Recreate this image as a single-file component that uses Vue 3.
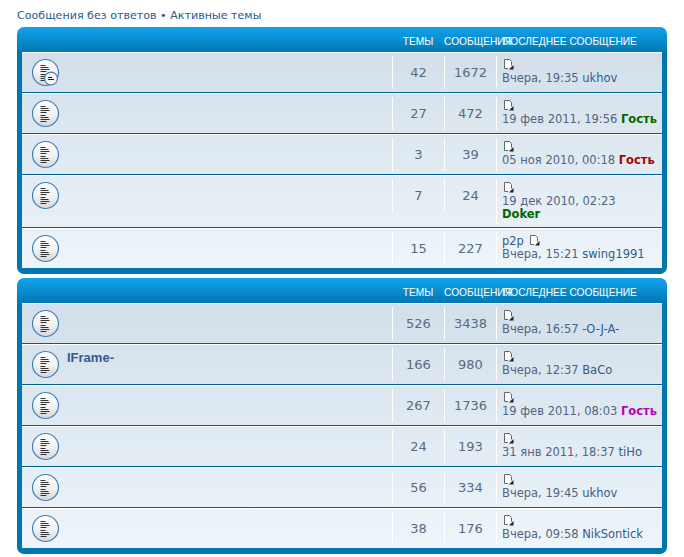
<script setup>
const forums = [
  [
    { t: 42, m: 1672, sub: true, lines: [[{ doc: 1 }], [{ s: 'Вчера, 19:35 ' }, { a: 'ukhov' }]] },
    { t: 27, m: 472, lines: [[{ doc: 1 }], [{ s: '19 фев 2011, 19:56 ' }, { b: 'Гость', c: 'green' }]] },
    { t: 3, m: 39, lines: [[{ doc: 1 }], [{ s: '05 ноя 2010, 00:18 ' }, { b: 'Гость', c: 'red' }]] },
    { t: 7, m: 24, lines: [[{ doc: 1 }], [{ s: '19 дек 2010, 02:23' }], [{ b: 'Doker', c: 'green' }]] },
    { t: 15, m: 227, lines: [[{ a: 'p2p ' }, { doc: 1 }], [{ s: 'Вчера, 15:21 ' }, { a: 'swing1991' }]] },
  ],
  [
    { t: 526, m: 3438, lines: [[{ doc: 1 }], [{ s: 'Вчера, 16:57 ' }, { a: '-O-J-A-' }]] },
    { t: 166, m: 980, title: 'IFrame-', lines: [[{ doc: 1 }], [{ s: 'Вчера, 12:37 ' }, { a: 'BaCo' }]] },
    { t: 267, m: 1736, lines: [[{ doc: 1 }], [{ s: '19 фев 2011, 08:03 ' }, { b: 'Гость', c: 'purple' }]] },
    { t: 24, m: 193, lines: [[{ doc: 1 }], [{ s: '31 янв 2011, 18:37 ' }, { a: 'tiHo' }]] },
    { t: 56, m: 334, lines: [[{ doc: 1 }], [{ s: 'Вчера, 19:45 ' }, { a: 'ukhov' }]] },
    { t: 38, m: 176, lines: [[{ doc: 1 }], [{ s: 'Вчера, 09:58 ' }, { a: 'NikSontick' }]] },
  ],
]
</script>

<template>
  <div class="page">
    <p class="crumbs">Сообщения без ответов • Активные темы</p>
    <section v-for="(rows, i) in forums" :key="i" class="panel">
      <header class="head">
        <span class="h-main"></span>
        <span class="h-num">ТЕМЫ</span>
        <span class="h-num">СООБЩЕНИЯ</span>
        <span class="h-last">ПОСЛЕДНЕЕ СООБЩЕНИЕ</span>
      </header>
      <div class="list">
        <div v-for="(r, j) in rows" :key="j" class="row">
          <div class="main">
            <svg class="ficon" width="29" height="29" viewBox="0 0 29 29">
              <defs>
                <linearGradient :id="`g${i}${j}`" x1="0" y1="0" x2="0" y2="1">
                  <stop offset="0" stop-color="#ffffff" />
                  <stop offset="0.55" stop-color="#f1f1f1" />
                  <stop offset="1" stop-color="#d4d6d8" />
                </linearGradient>
              </defs>
              <circle cx="14.5" cy="14.5" r="13" :fill="`url(#g${i}${j})`" stroke="#3f7fbd" stroke-width="1.2" />
              <g stroke="#333" stroke-width="1" fill="none">
                <path d="M9.500 7.500h5M9.500 9.500h8M9.500 11.500h9M9.500 13.500h6" />
                <path d="M9.500 16.500h5M9.500 18.500h8M9.500 20.500h9M9.500 22.500h6" />
              </g>
              <template v-if="r.sub">
                <circle cx="20" cy="20.500" r="6.400" fill="#f4f4f4" stroke="#3f7fbd" stroke-width="1.100" />
                <path d="M17 19.500h4M17 21.500h6" stroke="#222" stroke-width="1" />
              </template>
            </svg>
            <a v-if="r.title" class="ftitle">{{ r.title }}</a>
          </div>
          <div class="num"><span>{{ r.t }}</span></div>
          <div class="num"><span>{{ r.m }}</span></div>
          <div class="last">
            <div v-for="(line, k) in r.lines" :key="k" class="line">
              <template v-for="(p, n) in line" :key="n">
                <svg v-if="p.doc" class="doc" width="10" height="11" viewBox="0 0 10 11">
                  <path d="M7.500 6.500V2.500l-2-2h-5v9h3.500" fill="#fff" stroke="#666" stroke-width="1" />
                  <path d="M5 10.500 9.500 6v4.500z" fill="#222" />
                </svg>
                <span v-else-if="p.s">{{ p.s }}</span>
                <a v-else-if="p.a" class="user">{{ p.a }}</a>
                <b v-else :class="p.c">{{ p.b }}</b>
              </template>
            </div>
          </div>
        </div>
      </div>
    </section>
  </div>
</template>

<style>
html, body { background: #fff; }
</style>

<style scoped>
.page {
  width: 684px;
  height: 557px;
  overflow: hidden;
  box-sizing: border-box;
  padding: 9px 17px 0;
  font-family: "DejaVu Sans", Verdana, sans-serif;
  color: #536482;
}
.crumbs {
  margin: 0 0 5px;
  height: 13px;
  font-size: 11.100px;
  line-height: 13px;
  color: #2b5a8f;
}
.panel {
  width: 650px;
  box-sizing: border-box;
  margin-bottom: 4px;
  padding: 0 5px 6px;
  border-radius: 7px;
  background: linear-gradient(#12a3eb 0, #0076b1 26px, #0076b1 100%);
}
.head {
  display: grid;
  grid-template-columns: 370px 52px 52px 1fr;
  height: 25px;
  align-items: center;
  font-family: "Liberation Sans", Arial, sans-serif;
  font-size: 10.200px;
  color: #fff;
  white-space: nowrap;
  padding-top: 3px;
  box-sizing: border-box;
}
.h-num { text-align: center; }
.h-last { padding-left: 7px; }
.list {
  background: linear-gradient(#d2dfea, #eef5fa);
}
.row {
  display: grid;
  grid-template-columns: 370px 52px 52px 1fr;
  border-top: 1px solid #fff;
  border-bottom: 1px solid #00608f;
}
.row:last-child { border-bottom: 0; }
.main {
  display: flex;
  align-items: flex-start;
  padding: 5px 0 0 9px;
}
.ficon { display: block; flex: none; }
.ftitle {
  margin-left: 7px;
  font-family: "Liberation Sans", Arial, sans-serif;
  font-size: 13px;
  font-weight: 700;
  line-height: 15px;
  color: #33598f;
}
.num {
  display: flex;
  border-left: 1px solid #fff;
  margin: 3px 0;
  height: 33px;
  align-items: center;
  justify-content: center;
  font-size: 13px;
  color: #5a6a80;
}
.last {
  border-left: 1px solid #fff;
  margin: 3px 0;
  padding: 3px 0 3px 5px;
  font-size: 11.500px;
  line-height: 13px;
  white-space: nowrap;
}
.line { height: 13px; }
.doc { margin-left: 2px; vertical-align: -1px; }
.user { color: #33598f; }
.green { color: #006600; }
.red { color: #aa0000; }
.purple { color: #bb00bb; }
</style>
